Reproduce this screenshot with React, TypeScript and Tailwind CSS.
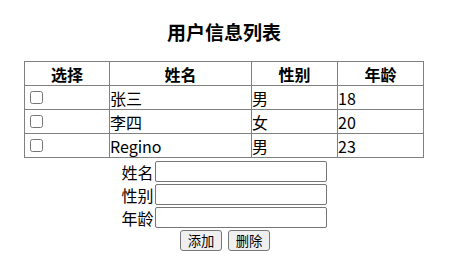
import React from "react";

const rows = [
  { name: "张三", sex: "男", age: "18" },
  { name: "李四", sex: "女", age: "20" },
  { name: "Regino", sex: "男", age: "23" },
];

export default function App() {
  const font = { fontFamily: '"Noto Sans CJK SC", "Noto Sans", sans-serif' };
  return (
    <div className="h-[265px] w-[452px] bg-white text-black" style={font}>
      <div className="w-[448px]">
        <h3 className="pt-[20px] text-center text-[19px] font-bold leading-[24px]">用户信息列表</h3>
        <table className="mx-auto mt-[17px] w-[400px] border-collapse border border-[#444] text-[16px] leading-[22px]">
          <thead>
            <tr className="h-[24px]">
              <th className="w-[85px] border border-[#808080] p-0 font-bold">选择</th>
              <th className="w-[142px] border border-[#808080] p-0 font-bold">姓名</th>
              <th className="w-[86px] border border-[#808080] p-0 font-bold">性别</th>
              <th className="border border-[#808080] p-0 font-bold">年龄</th>
            </tr>
          </thead>
          <tbody>
            {rows.map((r) => (
              <tr key={r.name} className="h-[24px]">
                <td className="border border-[#808080] p-0 pl-[5px]">
                  <input type="checkbox" className="m-0 block h-[13px] w-[13px]" />
                </td>
                <td className="border border-[#808080] p-0">{r.name}</td>
                <td className="border border-[#808080] p-0">{r.sex}</td>
                <td className="border border-[#808080] p-0">{r.age}</td>
              </tr>
            ))}
          </tbody>
        </table>
        <div className="mt-[2px] flex flex-col items-center text-[16px]">
          {["姓名", "性别", "年龄"].map((l) => (
            <div key={l} className="flex h-[23px] items-center">
              <span className="leading-[20px]">{l}</span>
              <input className="ml-[1px] h-[21px] w-[172px] rounded-[2px] border border-[#767676] bg-white px-1" />
            </div>
          ))}
          <div className="mt-[1px] flex gap-[6px] pl-[2px]">
            <button className="h-[21px] w-[42px] rounded-[3px] border border-[#767676] bg-[#efefef] text-[13.33px] leading-[19px]">添加</button>
            <button className="h-[21px] w-[42px] rounded-[3px] border border-[#767676] bg-[#efefef] text-[13.33px] leading-[19px]">删除</button>
          </div>
        </div>
      </div>
    </div>
  );
}
